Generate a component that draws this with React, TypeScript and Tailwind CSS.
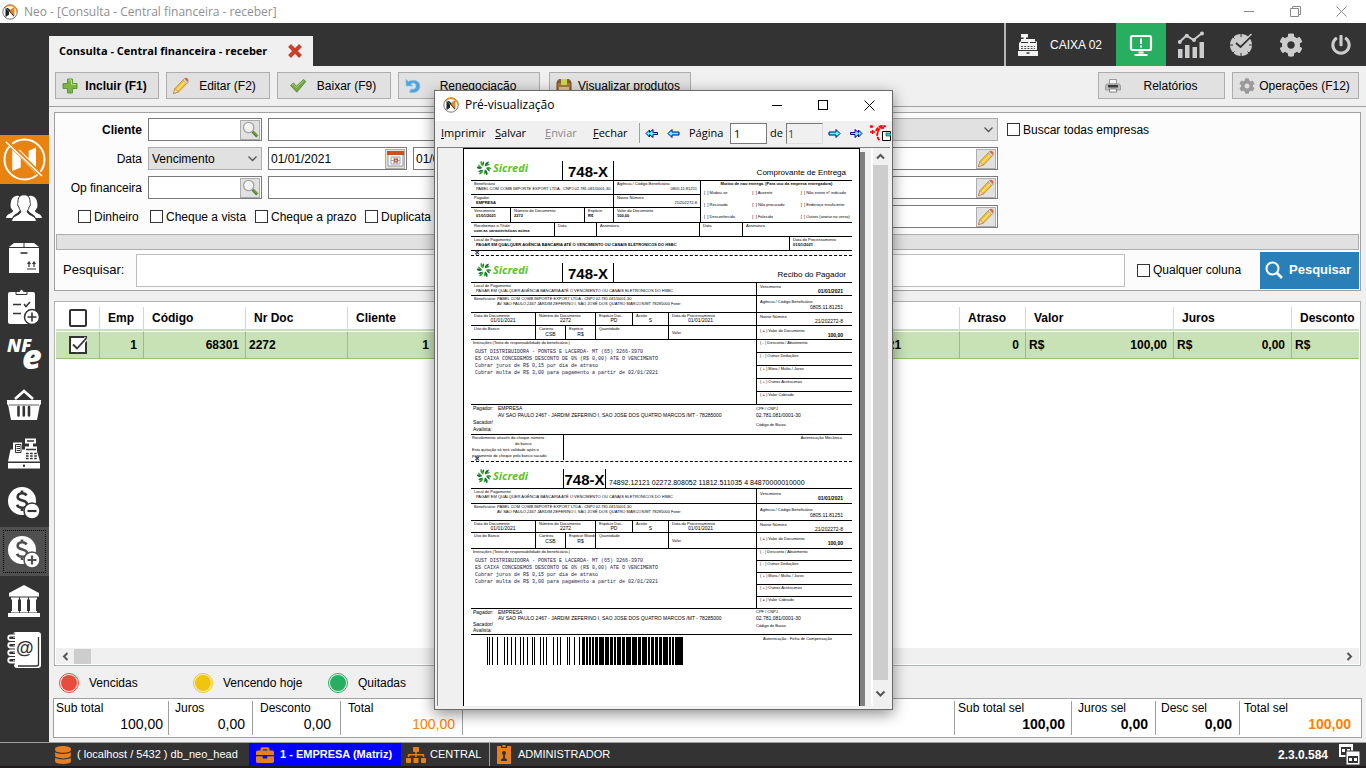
import type { ReactNode } from "react";
import { FaBriefcase, FaCog, FaCut, FaDatabase, FaSitemap, FaPowerOff } from "react-icons/fa";

/* ---------- ICONS ---------- */

function NeoLogo({ size = 16 }: { size?: number }) {
  return (
    <svg width={size} height={size} viewBox="0 0 16 16" className="shrink-0">
      <circle cx="8" cy="8" r="7.2" fill="#fff" stroke="#777" strokeWidth="1" />
      <path d="M3 3.500A7.200 7.200 0 0 1 15.200 8" fill="none" stroke="#f08519" strokeWidth="1.200" />
      <path d="M3.500 4v9L7 10.800V7.400z" fill="#222" />
      <path d="M4 4l8 8.800v-3L6 4z" fill="#222" />
      <path d="M8.500 5.200l4-2.200v9L8.500 8z" fill="#f08519" />
    </svg>
  );
}

function Plus() {
  return (
    <svg width="16" height="16" viewBox="0 0 16 16">
      <path d="M5.500 1h5v4.500H15v5h-4.500V15h-5v-4.500H1v-5h4.500z" fill="#7db343" stroke="#5f9438" />
      <path d="M6.500 2h3v4.500H14" fill="none" stroke="#b9dd8c" />
    </svg>
  );
}

function Pencil() {
  return (
    <svg width="18" height="18" viewBox="0 0 18 18" className="shrink-0">
      <path d="M1.500 16.500l1.500-5 9-9.500 3.600 3.600L6.500 15z" fill="#f7c22f" stroke="#b9812c" strokeWidth=".8" />
      <path d="M4.800 13.200l9-9.300" stroke="#fde68a" strokeWidth="1.300" />
      <path d="M1.500 16.500l1.500-5 3.500 3.500z" fill="#f3d9b1" stroke="#a9794a" strokeWidth=".6" />
      <path d="M11 3.100l1.400-1.500 3.700 3.700-1.400 1.500z" fill="#d4d8dc" stroke="#8c9196" strokeWidth=".6" />
      <path d="M12.400 1.600c1-1.300 2.300-1 3.200-.1s1.300 2.200.5 3.800z" fill="#e8622c" />
    </svg>
  );
}

function Check() {
  return (
    <svg width="18" height="16" viewBox="0 0 18 16">
      <path d="M1.500 7.500L4.500 5l3 3.200L14.500 1.500l2.300 2L7.800 14.200z" fill="#74a745" stroke="#4f8128" strokeWidth=".8" />
      <path d="M3 7.300l1.500-1.100 3 3.200 7-6.600" fill="none" stroke="#a9d07d" />
    </svg>
  );
}

function Undo() {
  return (
    <svg width="16" height="16" viewBox="0 0 16 16">
      <path d="M1 1v7h7L5.800 5.800C8.500 4 11 5.500 11 8s-2.500 4-5.500 3l-1 3.200C10 16 15 13 15 8S9 .500 3.500 3.500z" fill="#4da3dc" stroke="#93c9ee" strokeWidth=".7" />
    </svg>
  );
}

function Crate() {
  return (
    <svg width="16" height="16" viewBox="0 0 16 16">
      <path d="M1 3l2-2h10l2 2v11H1z" fill="#8c6239" />
      <path d="M1 4h14v10H1z" fill="#a9783f" stroke="#6d4a22" />
      <path d="M5 1h6v6H5z" fill="#c8d94e" />
      <path d="M3 9h10v3H3z" fill="#dcc39a" />
    </svg>
  );
}

function Printer() {
  return (
    <svg width="16" height="16" viewBox="0 0 16 16">
      <path d="M4.500 1.500h7V6h-7z" fill="#f5f5f5" stroke="#999" />
      <path d="M1.500 6h13l1 2v4H.500V8z" fill="#bdbdbd" stroke="#888" strokeWidth=".7" />
      <path d="M3 7h10v2.500H3z" fill="#3b3b3b" />
      <path d="M4.500 11h7v3h-7z" fill="#fff" stroke="#555" strokeWidth=".7" />
    </svg>
  );
}

function Lens() {
  return (
    <svg width="17" height="17" viewBox="0 0 17 17">
      <path d="M10.500 10.500l4.800 5" stroke="#4f7f28" strokeWidth="3" />
      <path d="M10.800 10.200l4.300 4.500" stroke="#8cba5a" />
      <circle cx="6.700" cy="6.500" r="5.200" fill="#f1f1f1" stroke="#a5a5a5" strokeWidth="1.300" />
      <path d="M3.500 6a3.500 3.500 0 0 1 3-3" fill="none" stroke="#fff" strokeWidth="1.500" />
    </svg>
  );
}

function Calendar() {
  return (
    <svg width="17" height="17" viewBox="0 0 17 17">
      <path d="M1 4h15v12H1z" fill="#fafafa" stroke="#999" />
      <path d="M0 1h17v4H0z" fill="#c9511d" />
      <path d="M4 7h9v7H4zM4 10.500h9M7 7v7M10 7v7" fill="none" stroke="#9aa3c4" />
      <path d="M7 8.500h4v4H7z" fill="#c9511d" />
      <path d="M8.300 9.800h1.400v1.400H8.300z" fill="#fff" />
    </svg>
  );
}

function Chevron({ d, strokeWidth = 1.3 }: { d: string; strokeWidth?: number }) {
  return (
    <svg width="11" height="11" viewBox="0 0 11 11" className="shrink-0">
      <path d={d} fill="none" stroke="#555" strokeWidth={strokeWidth} />
    </svg>
  );
}

const LEFT = "M7.500 2l-3.500 3.500 3.500 3.500";
const RIGHT = "M3.500 2l3.500 3.500-3.500 3.500";
const UP = "M2 7.500l3.500-3.500 3.500 3.500";
const DOWN = "M1.500 3.500l4 4 4-4";

function Register() {
  return (
    <svg width="34" height="34" viewBox="0 0 34 34">
      <path d="M1 26h32v5.500H1zM3.500 12.500h26l3.500 12H1zM6 5.500h9v7H6zM18 1.500h11v5H18zM22 6h4v5h-4zM18 9.500h12v5H18z" fill="#fff" />
      <path d="M8.500 7.500H14v8H8.500zM9.500 9.500H13M9.500 11.500H13M9.500 13.500H13" fill="none" stroke="#333" />
      <path d="M20 4h7M19 12.500h10" stroke="#333" strokeWidth="1.600" />
      <path d="M19 16.500h11M19 19h11M19 21.500h11" stroke="#333" strokeWidth="1.500" strokeDasharray="2.600 1.500" />
      <circle cx="17" cy="28.700" r="1.200" fill="#333" />
    </svg>
  );
}

function CashierIcon() {
  return (
    <svg width="20" height="22" viewBox="0 0 20 22">
      <path d="M3 0h7v3.500H8V5h9v2.500h2V16H1V9l2-2V5h2.500V3.500H3zM0 17h20v5H0z" fill="#f2f2f2" />
      <path d="M12 8.500h6M3 8.500h7" stroke="#333" />
      <path d="M3 12.500h14M3 14.500h14" stroke="#555" strokeDasharray="2 1.200" />
      <path d="M8.500 19h3" stroke="#333" strokeWidth="1.500" />
    </svg>
  );
}

function PeopleIcon() {
  return (
    <svg width="38" height="30" viewBox="0 0 38 30" fill="#fff">
      <path d="M11 2c3-1 4.500.5 4.300 1.300C13.500 5.500 13 8 13.500 11c.3 2 .9 3 1.600 4.500-1 4-6 3.500-7.800 8.500H1c.5-5 7-4 7-7.500-3-2.500-2.500-5-2.200-8C6.200 5 8 2.700 11 2z" />
      <path d="M27 2c-3-1-4.500.5-4.300 1.300C24.500 5.500 25 8 24.500 11c-.3 2-.9 3-1.600 4.500 1 4 6 3.500 7.800 8.500H37c-.5-5-7-4-7-7.500 3-2.500 2.500-5 2.200-8C31.800 5 30 2.700 27 2z" />
      <path d="M19 .8c4.600 0 6.200 3.200 6 7.400 1 1.600.3 3.600-.9 4.800-.4 2-1 3-2 4 0 5 8.900 3.500 9.400 10.500H6.500C7 20.500 15.900 22 15.900 17c-1-1-1.600-2-2-4-1.200-1.200-1.900-3.200-.9-4.800-.2-4.200 1.400-7.400 6-7.400z" stroke="#333" strokeWidth="1" />
    </svg>
  );
}

function BoxIcon() {
  return (
    <svg width="32" height="32" viewBox="0 0 32 32">
      <path d="M6 1h9.500v4H1zM16.500 1H26l5 4H16.500zM1 6h30v25H1z" fill="#fff" />
      <path d="M12.500 11h7" stroke="#333" strokeWidth="1.600" />
      <path d="M19 27h9M21 25v-4.500M26 25v-4.500M19.500 22l1.500-2 1.500 2M24.500 22l1.500-2 1.500 2" fill="none" stroke="#333" strokeWidth="1.200" />
    </svg>
  );
}

function ClipboardIcon() {
  return (
    <svg width="34" height="36" viewBox="0 0 34 36">
      <path d="M3 3h23a2 2 0 0 1 2 2v28a2 2 0 0 1-2 2H3a2 2 0 0 1-2-2V5a2 2 0 0 1 2-2z" fill="#fff" />
      <path d="M9 5.500V2.500h3.500a2 2 0 0 1 4 0H20v3z" fill="#fff" stroke="#333" />
      <path d="M6 15.500h8M6 24.500h8M17 15l2 2.500 4-4.500" fill="none" stroke="#333" strokeWidth="1.500" />
      <circle cx="25" cy="28" r="7.500" fill="#fff" stroke="#333" strokeWidth="1.500" />
      <path d="M25 23.500v9M20.500 28h9" stroke="#333" strokeWidth="1.600" />
    </svg>
  );
}

function NfeIcon() {
  return (
    <svg width="49" height="49" viewBox="0 0 49 49" fill="#fff" fontFamily="Open Sans, sans-serif" fontWeight="800" fontStyle="italic">
      <text x="7" y="21" fontSize="18">NF</text>
      <text x="22" y="38" fontSize="34">e</text>
    </svg>
  );
}

function BasketIcon() {
  return (
    <svg width="36" height="34" viewBox="0 0 36 34">
      <path d="M9 11l9-8 9 8" fill="none" stroke="#fff" strokeWidth="2.600" />
      <path d="M1 12h34v4.500h-1L31 32H5L2 16.500H1z" fill="#fff" />
      <path d="M3 17h30" stroke="#333" strokeWidth=".8" />
      <path d="M12.500 19v8.500M17.800 19v8.500M23 19v8.500" stroke="#333" strokeWidth="2.600" strokeLinecap="round" />
    </svg>
  );
}

function MoneyIcon({ plus = false }: { plus?: boolean }) {
  const dark = plus ? "#505050" : "#333";
  return (
    <svg width="34" height="34" viewBox="0 0 34 34">
      <circle cx="15" cy="15" r="14" fill="#fff" />
      <path d="M19.500 9.500c-1-1.800-3-2.300-4.600-2.200-2.800.2-4.300 1.900-4.200 3.900.2 4.200 9.500 2.500 9.300 6.800-.1 2.400-2.200 3.800-4.800 3.800-2.400 0-4.400-1-5.200-3M15 4.500v3M15 22v3" fill="none" stroke={dark} strokeWidth="2.600" />
      <circle cx="25" cy="25" r="8" fill="#fff" stroke={dark} strokeWidth="1.500" />
      <path d={plus ? "M25 20.500v9M20.500 25h9" : "M20.500 25h9"} stroke={dark} strokeWidth="2.200" />
    </svg>
  );
}

function BankIcon() {
  return (
    <svg width="34" height="34" viewBox="0 0 34 34" fill="#fff">
      <path d="M17 1l15 8v3.500H2V9zM4 13.500h8v2h-1V27h1v1.500H4V27h1V15.500H4zM13 13.500h8v2h-1V27h1v1.500h-8V27h1V15.500h-1zM22 13.500h8v2h-1V27h1v1.500h-8V27h1V15.500h-1zM1 29h32v4H1z" />
    </svg>
  );
}

function ContactsIcon() {
  return (
    <svg width="36" height="38" viewBox="0 0 36 38">
      <path d="M10 1h22a3 3 0 0 1 3 3v30a3 3 0 0 1-3 3H11a3 3 0 0 1-3-3l-1-3V4a3 3 0 0 1 3-3z" fill="#fff" />
      <path d="M32.500 6v27a2 2 0 0 1-2 2H12" fill="none" stroke="#333" strokeWidth="1.300" />
      <path d="M9 4.500H4.500a2 2 0 0 0 0 4.500H9M9 12H4.500a2 2 0 0 0 0 4.500H9M9 19.500H4.500a2 2 0 0 0 0 4.500H9M9 27H4.500a2 2 0 0 0 0 4.500H9" fill="none" stroke="#333" strokeWidth="4" />
      <path d="M9 4.500H4.500a2 2 0 0 0 0 4.500H9M9 12H4.500a2 2 0 0 0 0 4.500H9M9 19.500H4.500a2 2 0 0 0 0 4.500H9M9 27H4.500a2 2 0 0 0 0 4.500H9" fill="none" stroke="#fff" strokeWidth="1.800" />
      <text x="10" y="23" fontFamily="Liberation Sans, sans-serif" fontSize="18" fontWeight="700" fill="#333">@</text>
    </svg>
  );
}

function NeoWhite() {
  return (
    <svg width="43" height="43" viewBox="0 0 43 43">
      <circle cx="21.500" cy="21.500" r="20" fill="none" stroke="#fff" strokeWidth="2" />
      <path d="M9.300 11v22l8.400-3.500V20L33 35.500V9.500L25.700 12.800V20.500L17 12z" fill="#fff" />
      <path d="M3 2.500l36.500 36" stroke="#e8830f" strokeWidth="4" />
      <path d="M3 4l36 34" stroke="#fff" strokeWidth="1.600" />
    </svg>
  );
}

function MonitorIcon() {
  return (
    <svg width="24" height="24" viewBox="0 0 24 24" fill="none" stroke="#fff">
      <rect x="2" y="3" width="20" height="14" rx="1.500" strokeWidth="2.200" />
      <path d="M12 5.500v5.500M12 12.500v2" strokeWidth="2" />
      <path d="M9.500 19.500h5M5.500 22h13" strokeWidth="1.800" />
    </svg>
  );
}

function ChartIcon() {
  return (
    <svg width="28" height="28" viewBox="0 0 28 28" fill="#ccc">
      <path d="M1 18h4.500v9H1zM8 14h4.500v13H8zM15.500 16H20v11h-4.500zM22.500 11H27v16h-4.500z" />
      <path d="M2.500 11l7-6.500 7 4.500 8-6.500" fill="none" stroke="#ccc" strokeWidth="2" />
      <circle cx="2.800" cy="11" r="2" /><circle cx="9.800" cy="4.800" r="2" /><circle cx="17" cy="9" r="2" /><circle cx="25" cy="2.500" r="2" />
    </svg>
  );
}

function ClockIcon() {
  return (
    <svg width="24" height="24" viewBox="0 0 24 24">
      <circle cx="12" cy="12" r="11" fill="#ccc" />
      <path d="M12 1v3M12 20v3M1 12h3M20 12h3M4 4l1.500 1.500M4 20l1.500-1.500M20 20l-1.500-1.500" stroke="#333" />
      <path d="M7 10l4.500 4L23 2.500" fill="none" stroke="#333" strokeWidth="2" />
      <path d="M12 11L22.500 1" fill="none" stroke="#ccc" strokeWidth="1.500" />
    </svg>
  );
}

function WindowsIcon() {
  return (
    <svg width="21" height="21" viewBox="0 0 21 21">
      <path d="M0 0h14v13H0z" fill="#fff" />
      <path d="M2 3h10v8H2z" fill="#333" />
      <path d="M3 5h3v3H3zM8 5h3v3H8z" fill="#fff" />
      <path d="M7 7h14v14H7z" fill="#fff" stroke="#333" />
      <path d="M9 12h10v7H9z" fill="#333" />
      <path d="M10 14h3v3h-3zM15 14h3v3h-3z" fill="#fff" />
    </svg>
  );
}

function BadgeIcon() {
  return (
    <svg width="14" height="19" viewBox="0 0 14 19">
      <path d="M0 1h4v2h6V1h4v18H0z" fill="#e67e22" />
      <path d="M5.500 0h3v2h-3z" fill="#e67e22" />
      <circle cx="7" cy="8" r="2" fill="#333" />
      <path d="M6 9h2v4l2 1.500V16H4v-1.500L6 13z" fill="#333" />
    </svg>
  );
}

function Arrow({ double = false, right = false }: { double?: boolean; right?: boolean }) {
  return (
    <svg width="13" height="11" viewBox="0 0 13 11" className={right ? "rotate-180" : ""}>
      {double ? (
        <path d="M1 5.500L4.500 2v2.500L8 1.500v3h4.500v2H8v3L4.500 6.500V9z" fill="#5ff" stroke="#000090" />
      ) : (
        <path d="M1 5.500L5 1.500v2.500h7v3H5v2.500z" fill="#5ff" stroke="#000090" />
      )}
    </svg>
  );
}

function Sicredi() {
  const petals = [0, 60, 120, 180, 240, 300];
  return (
    <span className="mb-1 flex h-4 items-center gap-[2px] font-['Open_Sans',sans-serif] text-[11px] font-bold italic text-[#5cc02c]">
      <svg width="14" height="14" viewBox="-7 -7 14 14">
        {petals.map((angle, i) => (
          <path
            key={angle}
            d="M1-1.500C.5-4 2-6.300 5-6.300 4.300-4.500 3.500-2 1-1.500zM-1-2.500C-2-4.500-1.500-6 0-6.800.2-5 .3-4-1-2.500z"
            transform={`rotate(${angle})`}
            fill={i % 2 ? "#3fa535" : "#156f3c"}
          />
        ))}
      </svg>
      Sicredi
    </span>
  );
}

/* ---------- BARCODE ---------- */

const thinBars = [0, 2, 5, 10, 17, 20, 24, 28, 33, 36, 40, 45, 47, 53, 56, 59, 66, 70, 73, 80, 82, 87, 92];
const slits = [98, 101, 104, 107, 111, 117, 122, 126, 129, 134, 138, 144, 150, 154, 160, 163, 167, 171, 175, 181, 184, 187];

function Barcode() {
  return (
    <svg width="196" height="28" viewBox="0 0 196 28" shapeRendering="crispEdges" className="ml-4 mt-[2px]">
      {thinBars.map((x) => <rect key={x} x={x} width="1" height="28" />)}
      <rect x="95" width="101" height="28" />
      {slits.map((x) => <rect key={x} x={x} width="1" height="28" fill="#fff" />)}
    </svg>
  );
}

/* ---------- BANK SLIP ---------- */

type CellProps = { label?: string; value?: string; className?: string; valueClass?: string };

function Cell({ label, value, className = "", valueClass = "" }: CellProps) {
  return (
    <div className={`flex flex-col overflow-hidden whitespace-nowrap border-black px-[3px] text-[4px] leading-[5px] ${className}`}>
      <span>{label}</span>
      {value && <span className={valueClass}>{value}</span>}
    </div>
  );
}

function SlipHeader({ title, code, className }: { title?: string; code?: string; className: string }) {
  return (
    <div className={`flex items-end border-b border-black ${className}`}>
      <div className={`pl-[6px] ${code ? "w-[92px]" : "w-[91px]"}`}><Sicredi /></div>
      <div className={`flex h-[19px] items-end justify-center whitespace-nowrap border-x border-black text-[15px] font-bold leading-[16px] ${code ? "w-[43px]" : "w-[52px]"}`}>748-X</div>
      {code && <div className="pl-[3px] text-[7px] leading-[10px]">{code}</div>}
      {title && <div className="flex-1 pr-[6px] text-right text-[8px] leading-[14px]">{title}</div>}
    </div>
  );
}

function CutLine({ className }: { className: string }) {
  return (
    <div className={`flex items-end border-b border-dashed border-black pl-1 ${className}`}>
      <FaCut size={5} color="#234" className="shrink-0" />
    </div>
  );
}

const motives = [
  "Mudou-se", "Ausente", "Não existe nº indicado",
  "Recusado", "Não procurado", "Endereço insuficiente",
  "Desconhecido", "Falecido", "Outros (anotar no verso)",
];

function Receipt() {
  return (
    <section>
      <SlipHeader title="Comprovante de Entrega" className="h-8" />
      <div className="flex border-b border-black">
        <div className="w-[229px]">
          <div className="flex h-[14px] border-b border-black">
            <Cell className="w-[143px] border-r" label="Beneficiário" value="PABEL COM COMB IMPORTE EXPORT LTDA - CNPJ 02.781.081/0001-30" valueClass="pl-[2px]" />
            <Cell className="flex-1" label="Agência / Código Beneficiário" value="0805.11.81251" valueClass="text-right" />
          </div>
          <div className="flex h-[13px] border-b border-black">
            <Cell className="w-[143px] border-r" label="Pagador" value="EMPRESA" valueClass="pl-[2px] font-bold" />
            <Cell className="flex-1" label="Nosso Número" value="21/202272-8" valueClass="text-right" />
          </div>
          <div className="flex h-[14px]">
            <Cell className="w-10 border-r" label="Vencimento" value="01/01/2021" valueClass="pl-[2px] font-bold" />
            <Cell className="w-[74px] border-r" label="Número do Documento" value="2272" valueClass="font-bold" />
            <Cell className="w-[29px] border-r" label="Espécie" value="R$" valueClass="font-bold" />
            <Cell className="flex-1" label="Valor do Documento" value="100,00" valueClass="font-bold" />
          </div>
        </div>
        <div className="flex-1 border-l border-black px-[3px] text-[4px] leading-[6px]">
          <p className="text-center font-bold">Motivo de nao entrega. (Para uso da empresa entregadora)</p>
          <div className="grid grid-cols-3 gap-y-[6px] whitespace-nowrap pt-[3px]">
            {motives.map((motive) => <span key={motive}>[ &nbsp;] {motive}</span>)}
          </div>
        </div>
      </div>
      <div className="flex h-[14px] border-b border-black">
        <Cell className="w-[84px] border-r" label="Recebemos o Título" value="com as características acima" valueClass="font-bold" />
        <Cell className="w-[42px] border-r" label="Data" />
        <Cell className="w-[103px] border-r" label="Assinatura" />
        <Cell className="w-[43px] border-r" label="Data" />
        <Cell className="flex-1" label="Assinatura" />
      </div>
      <div className="flex h-[14px] border-b border-black">
        <Cell className="flex-1" label="Local de Pagamento" value="PAGAR EM QUALQUER AGÊNCIA BANCARIA ATÉ O VENCIMENTO OU CANAIS ELETRONICOS DO HSBC" valueClass="pl-[2px] font-bold" />
        <Cell className="w-[63px] border-l" label="Data do Processamento" value="01/01/2021" valueClass="font-bold" />
      </div>
      <CutLine className="h-[5px]" />
    </section>
  );
}

const deductions = ["( - ) Desconto / Abatimento", "( - ) Outras Deduções", "( + ) Mora / Multa / Juros", "( + ) Outros Acréscimos", "( = ) Valor Cobrado"];

type SlipProps = {
  title?: string;
  code?: string;
  placeClass: string;
  docClass: string;
  useClass: string;
  bodyClass: string;
  payerClass: string;
};

function Slip({ title, code, placeClass, docClass, useClass, bodyClass, payerClass }: SlipProps) {
  return (
    <section>
      <SlipHeader title={title} code={code} className="h-[27px]" />
      <div className={`flex border-b border-black ${placeClass}`}>
        <Cell className="flex-1" label="Local de Pagamento" value="PAGAR EM QUALQUER AGÊNCIA BANCARIA ATÉ O VENCIMENTO OU CANAIS ELETRONICOS DO HSBC" valueClass="pl-[2px]" />
        <Cell className="w-24 justify-center border-l" label="Vencimento" value="01/01/2021" valueClass="pr-[6px] text-right text-[5px] font-bold" />
      </div>
      <div className="flex h-[17px] border-b border-black">
        <Cell className="flex-1" label="Beneficiário: PABEL COM COMB IMPORTE EXPORT LTDA - CNPJ 02.781.081/0001-30" value="AV SAO PAULO,2467 JARDIM ZEFERINO I, SÃO JOSÉ DOS QUATRO MARCOS/MT 78285000 Fone:" valueClass="pl-[23px]" />
        <Cell className="w-24 justify-center border-l" label="Agência / Código Beneficiário" value="0805.11.81251" valueClass="pr-[6px] text-right text-[5px] leading-[6px]" />
      </div>
      <div className={`flex border-b border-black ${docClass}`}>
        <Cell className="w-[65px] border-r" label="Data do Documento" value="01/01/2021" valueClass="text-center text-[5px]" />
        <Cell className="w-[60px] border-r" label="Número do Documento" value="2272" valueClass="text-center text-[5px]" />
        <Cell className="w-[37px] border-r" label="Espécie Doc." value="PD" valueClass="text-center text-[5px]" />
        <Cell className="w-[36px] border-r" label="Aceite" value="S" valueClass="text-center text-[5px]" />
        <Cell className="flex-1" label="Data do Processamento" value="01/01/2021" valueClass="pl-4 text-[5px]" />
        <Cell className="w-24 justify-center border-l" label="Nosso Número" value="21/202272-8" valueClass="pr-[6px] text-right text-[5px]" />
      </div>
      <div className={`flex border-b border-black ${useClass}`}>
        <Cell className="w-[65px] border-r" label="Uso do Banco" />
        <Cell className="w-[30px] border-r" label="Carteira" value="CSB" valueClass="text-center text-[5px] leading-[7px]" />
        <Cell className="w-[30px] border-r" label={code ? "Espécie Moeda" : "Espécie"} value="R$" valueClass="text-center text-[5px] leading-[7px]" />
        <Cell className="w-[73px] border-r" label="Quantidade" />
        <Cell className="flex-1 justify-center" label="Valor" />
        <Cell className="w-24 justify-center border-l" label="( = ) Valor do Documento" value="100,00" valueClass="pr-[6px] text-right text-[5px] font-bold" />
      </div>
      <div className={`flex border-b border-black ${bodyClass}`}>
        <div className="flex-1 px-[2px] text-[4px] leading-[6px]">
          <p>Instruções (Texto de responsabilidade do beneficiário.)</p>
          <p className="whitespace-pre pl-[2px] pt-[3px] font-['Liberation_Mono',monospace] text-[5px] leading-[7px] text-[#224]">
            {`GUST DISTRIBUIDORA - PONTES E LACERDA- MT (65) 3266-3970
ES CAIXA CONCEDEMOS DESCONTO DE 0% (R$ 0,00) ATE O VENCIMENTO
Cobrar juros de R$ 0,15 por dia de atraso
Cobrar multa de R$ 3,00 para pagamento a partir de 02/01/2021`}
          </p>
        </div>
        <div className="flex w-24 flex-col divide-y divide-black border-l border-black">
          {deductions.map((label) => <Cell key={label} className="flex-1" label={label} />)}
        </div>
      </div>
      <div className={`flex border-b border-black px-[2px] text-[5px] ${payerClass}`}>
        <div className="flex-1">
          <p><span className="inline-block w-[25px]">Pagador:</span>EMPRESA</p>
          <p className="pl-[25px]">AV SAO PAULO 2467 - JARDIM ZEFERINO I, SAO JOSE DOS QUATRO MARCOS /MT - 78285000</p>
          <p>Sacador/</p>
          <p>Avalista:</p>
        </div>
        <div className="w-[94px]">
          <p className="text-[4px]">CPF / CNPJ</p>
          <p>02.781.081/0001-30</p>
          <p className="pt-[2px] text-[4px]">Código de Baixa:</p>
        </div>
      </div>
    </section>
  );
}

/* ---------- PREVIEW WINDOW ---------- */

function Preview() {
  return (
    <div role="dialog" aria-label="Pré-visualização" className="absolute left-[434px] top-[90px] z-10 flex h-[620px] w-[459px] flex-col border border-[#6b6b6b] bg-[#f0f0f0] font-['Open_Sans',sans-serif] text-black shadow-[0_4px_14px_rgba(0,0,0,0.45)]">
      <div className="flex h-[30px] shrink-0 items-center bg-white pl-2 pb-[2px] text-xs">
        <NeoLogo />
        <span className="flex-1 pl-[6px]">Pré-visualização</span>
        <button aria-label="Minimizar" className="grid h-full w-[46px] place-items-center"><span className="h-px w-[10px] bg-black" /></button>
        <button aria-label="Maximizar" className="grid h-full w-[46px] place-items-center"><span className="h-[10px] w-[10px] border border-black" /></button>
        <button aria-label="Fechar janela" className="grid h-full w-[46px] place-items-center">
          <svg width="11" height="11" viewBox="0 0 11 11"><path d="M.5.5l10 10M10.500.5l-10 10" stroke="#000" /></svg>
        </button>
      </div>

      <div className="flex h-[26px] shrink-0 items-center overflow-hidden pb-[2px] pl-[6px] text-[11px]">
        <button className="w-[54px] text-left"><u>I</u>mprimir</button>
        <button className="w-[50px] text-left"><u>S</u>alvar</button>
        <button className="w-12 text-left text-[#8a8a8a]"><u>E</u>nviar</button>
        <button className="w-[46px] text-left"><u>F</u>echar</button>
        <span className="h-5 w-px bg-[#a0a0a0]" />
        <button aria-label="Primeira página" className="ml-[5px]"><Arrow double /></button>
        <button aria-label="Página anterior" className="ml-[9px]"><Arrow /></button>
        <label htmlFor="pagina" className="ml-[9px] w-[41px]">Página</label>
        <input id="pagina" defaultValue="1" className="h-[21px] w-[37px] border border-[#7a7a7a] bg-white px-[3px]" />
        <label htmlFor="paginas" className="w-[19px] pl-[3px]">de</label>
        <input id="paginas" defaultValue="1" readOnly className="h-[21px] w-[37px] border border-l-[#7a7a7a] border-t-[#7a7a7a] border-b-[#ddd] border-r-[#ddd] px-[1px] text-[#444]" />
        <button aria-label="Próxima página" className="ml-[5px]"><Arrow right /></button>
        <button aria-label="Última página" className="ml-[9px]"><Arrow double right /></button>
        <button aria-label="Fechar relatório" className="ml-[6px] shrink-0">
          <svg width="22" height="18" viewBox="0 0 22 18">
            <path d="M1 8h5M3.500 6v4" fill="none" stroke="#f00" strokeWidth="1.500" />
            <path d="M7 7c1-4 5-6 10-4.500M9 8c0-3 2.500-4.500 6-4M9 8c-2 3 0 7 2 9" fill="none" stroke="#f00" strokeWidth="1.800" strokeDasharray="4 .8" />
            <circle cx="2.500" cy="2.500" r="1.600" fill="#f00" />
            <path d="M13.500 7.500h8v9h-8z" fill="#fff" stroke="#000" />
            <path d="M17 9h5v3h-5z" fill="#3cc" stroke="#033" strokeWidth=".6" />
          </svg>
        </button>
      </div>

      <div className="mx-[2px] mb-[3px] flex min-h-0 flex-1 border-l border-t border-[#808080]">
        <div className="flex min-w-0 flex-1 overflow-hidden pl-[25px] font-['Liberation_Sans',Arial,sans-serif]">
          <div className="w-[397px] shrink-0 border border-b-0 border-black bg-white pl-[7px] pr-[7px]">
            <Receipt />
            <Slip title="Recibo do Pagador" placeClass="h-[13px]" docClass="h-[13px]" useClass="h-[14px]" bodyClass="h-[65px]" payerClass="h-[30px] leading-[7px]" />
            <div className="flex h-[25px] text-[4px] leading-[6px]">
              <div className="w-[93px] whitespace-nowrap border-r border-black pl-[1px]">
                <p>Recebimento através do cheque número</p>
                <p className="pl-[43px]">do banco</p>
                <p>Esta quitação só terá validade após o</p>
                <p>pagamento do cheque pelo banco sacado</p>
              </div>
              <p className="flex-1 pr-[10px] text-right">Autenticação Mecânica</p>
            </div>
            <CutLine className="h-[2px]" />
            <Slip code="74892.12121 02272.808052 11812.511035 4 84870000010000" placeClass="h-[15px]" docClass="h-[12px]" useClass="h-4" bodyClass="h-[60px]" payerClass="h-[26px] leading-[6px]" />
            <div className="flex justify-between">
              <Barcode />
              <p className="pr-5 text-[4px] leading-[8px]">Autenticação - Ficha de Compensação</p>
            </div>
          </div>
          <div className="mt-1 w-[5px] shrink-0 bg-[#808080]" />
        </div>
        <div className="mr-[2px] flex w-[17px] shrink-0 flex-col items-center border-l-2 border-white py-[3px]">
          <Chevron d={UP} strokeWidth={2} />
          <div className="my-[3px] w-[15px] flex-1 bg-[#cdcdcd]" />
          <div className="grid h-5 place-items-center"><Chevron d={DOWN} strokeWidth={2} /></div>
        </div>
      </div>
    </div>
  );
}

/* ---------- FORM PARTS ---------- */

function ToolButton({ icon, children, className }: { icon: ReactNode; children: ReactNode; className: string }) {
  return (
    <button className={`flex h-[27px] items-center whitespace-nowrap border border-[#adadad] bg-[#e1e1e1] hover:border-[#0078d7] ${className}`}>
      {icon}
      <span className="flex-1 text-center">{children}</span>
    </button>
  );
}

function Field({ label, value = "", icon, className }: { label: string; value?: string; icon?: ReactNode; className: string }) {
  return (
    <div className={`flex h-[23px] shrink-0 items-center border border-[#7a7a7a] bg-white ${className}`}>
      <input aria-label={label} defaultValue={value} className="h-full w-0 flex-1 px-[2px] outline-none" />
      {icon && <button aria-label={`Abrir ${label}`} className="mr-px grid h-5 w-5 shrink-0 place-items-center border border-[#adadad] bg-[#e1e1e1]">{icon}</button>}
    </div>
  );
}

function Select({ label, options, className }: { label: string; options: string[]; className: string }) {
  return (
    <div className={`relative flex h-[23px] shrink-0 items-center border border-[#adadad] bg-[#e1e1e1] ${className}`}>
      <select aria-label={label} className="h-full w-full appearance-none pl-[3px] outline-none">
        {options.map((option) => <option key={option}>{option}</option>)}
      </select>
      <span className="pointer-events-none absolute right-[3px]"><Chevron d={DOWN} /></span>
    </div>
  );
}

function Tick({ children }: { children: ReactNode }) {
  return (
    <label className="flex items-center gap-[3px] whitespace-nowrap">
      <input type="checkbox" className="h-[13px] w-[13px] appearance-none border border-[#333] bg-white checked:bg-[#333]" />
      {children}
    </label>
  );
}

function Total({ label, value, className }: { label: string; value: string; className: string }) {
  return (
    <div className={`my-[2px] flex flex-col border-[#a0a0a0] leading-[15px] ${className}`}>
      <span>{label}</span>
      <span className="text-right text-sm leading-[17px]">{value}</span>
    </div>
  );
}

function Legend({ children, className }: { children: ReactNode; className: string }) {
  return (
    <div className="flex items-center gap-[10px]">
      <span className={`grid h-5 w-5 place-items-center rounded-full border ${className}`}>
        <span className="h-4 w-4 rounded-full bg-current" />
      </span>
      <span className="text-black">{children}</span>
    </div>
  );
}

const menu = [
  { name: "Pessoas", icon: <PeopleIcon /> },
  { name: "Produtos", icon: <BoxIcon /> },
  { name: "Pedidos", icon: <ClipboardIcon /> },
  { name: "Nota fiscal", icon: <NfeIcon /> },
  { name: "Compras", icon: <BasketIcon /> },
  { name: "Caixa", icon: <Register /> },
  { name: "Contas a pagar", icon: <MoneyIcon /> },
  { name: "Contas a receber", icon: <MoneyIcon plus />, active: true },
  { name: "Bancos", icon: <BankIcon /> },
  { name: "Agenda", icon: <ContactsIcon /> },
];

const columns = [
  { title: "Emp", value: "1", width: "w-[44px]", align: "text-right" },
  { title: "Código", value: "68301", width: "w-[102px]", align: "text-right" },
  { title: "Nr Doc", value: "2272", width: "w-[102px]", align: "text-left" },
  { title: "Cliente", value: "1", width: "w-[88px]", align: "text-right" },
  { title: "Nome", value: "EMPRESA", width: "", align: "text-left" },
  { title: "Data", value: "01/01/2021", width: "w-[122px]", align: "text-left" },
  { title: "Atraso", value: "0", width: "w-[66px]", align: "text-right" },
  { title: "Valor", value: "100,00", currency: true, width: "w-[148px]", align: "text-right" },
  { title: "Juros", value: "0,00", currency: true, width: "w-[118px]", align: "text-right" },
  { title: "Desconto", value: "", currency: true, width: "w-[68px]", align: "text-right" },
];

/* ---------- PAGE ---------- */

export default function App() {
  return (
    <div className="relative flex min-h-screen flex-col overflow-hidden bg-[#333] font-['Liberation_Sans',Arial,sans-serif] text-xs text-black">

      {/* TITLE BAR */}

      <header className="flex h-[23px] shrink-0 items-center bg-white pl-[2px] font-['Open_Sans',sans-serif] text-[#8f8f8f]">
        <NeoLogo />
        <span className="flex-1 pl-[6px]">Neo - [Consulta - Central financeira - receber]</span>
        <button aria-label="Minimizar" className="grid h-full w-[46px] place-items-center"><span className="h-px w-[10px] bg-[#888]" /></button>
        <button aria-label="Restaurar" className="grid h-full w-[46px] place-items-center">
          <svg width="11" height="11" viewBox="0 0 11 11" fill="none" stroke="#888"><path d="M.5 2.500h8v8h-8zM2.500 2.500v-2h8v8h-2" /></svg>
        </button>
        <button aria-label="Fechar" className="mr-[2px] grid h-full w-[46px] place-items-center">
          <svg width="11" height="11" viewBox="0 0 11 11"><path d="M.5.5l10 10M10.500.5l-10 10" stroke="#888" /></svg>
        </button>
      </header>

      <div className="flex flex-1">

        {/* SIDEBAR */}

        <nav className="w-[49px] shrink-0 pt-28">
          <button aria-label="Neo" className="grid h-[49px] w-full place-items-center bg-[#e8830f]"><NeoWhite /></button>
          {menu.map((item) => (
            <button
              key={item.name}
              aria-label={item.name}
              className={`grid h-[49px] w-full place-items-center pr-px ${item.active ? "bg-[#505050] outline-1 -outline-offset-4 outline-dotted outline-black" : ""}`}
            >
              {item.icon}
            </button>
          ))}
        </nav>

        <div className="flex min-w-0 flex-1 flex-col">

          {/* TABS */}

          <div className="flex h-[43px] shrink-0 items-end justify-between">
            <div className="flex h-[30px] w-[264px] items-center justify-between whitespace-nowrap bg-[#f0f0f0] px-[10px] font-['Open_Sans',sans-serif] text-[11px] font-bold">
              Consulta - Central financeira - receber
              <button aria-label="Fechar aba">
                <svg width="16" height="16" viewBox="0 0 16 16"><path d="M2.500 2.500l11 11M13.500 2.500l-11 11" stroke="#c8402c" strokeWidth="4" /></svg>
              </button>
            </div>
            <div className="flex h-full items-center border-l-2 border-[#b5b5b5] text-white">
              <div className="flex w-[110px] items-center gap-3 pl-[12px]"><CashierIcon />CAIXA 02</div>
              <button aria-label="Avisos" className="grid h-full w-[50px] place-items-center bg-[#27ae60]"><MonitorIcon /></button>
              <button aria-label="Indicadores" className="grid h-full w-[50px] place-items-center"><ChartIcon /></button>
              <button aria-label="Tarefas" className="grid h-full w-[50px] place-items-center"><ClockIcon /></button>
              <button aria-label="Configurações" className="grid h-full w-[50px] place-items-center"><FaCog size={24} color="#ccc" /></button>
              <button aria-label="Sair" className="grid h-full w-[50px] place-items-center"><FaPowerOff size={20} color="#ccc" /></button>
            </div>
          </div>

          <main className="flex flex-1 flex-col bg-[#f0f0f0]">

            {/* TOOLBAR */}

            <div className="flex h-[41px] shrink-0 items-start gap-[7px] border-b border-[#a0a0a0] pl-[6px] pr-[7px] pt-[6px]">
              <ToolButton icon={<Plus />} className="w-[104px] pl-[6px] pr-1 font-bold">Incluir (F1)</ToolButton>
              <ToolButton icon={<Pencil />} className="w-[104px] pl-[5px] pr-1">Editar (F2)</ToolButton>
              <ToolButton icon={<Check />} className="w-[114px] pl-[11px] pr-1">Baixar (F9)</ToolButton>
              <ToolButton icon={<Undo />} className="w-[142px] pl-[6px] pr-1">Renegociação</ToolButton>
              <ToolButton icon={<Crate />} className="ml-[2px] w-[142px] pl-[6px] pr-1">Visualizar produtos</ToolButton>
              <ToolButton icon={<Printer />} className="ml-auto w-[127px] pl-[6px] pr-1">Relatórios</ToolButton>
              <ToolButton icon={<FaCog size={16} color="#9a9a9a" />} className="w-[127px] pl-[6px] pr-1">Operações (F12)</ToolButton>
            </div>

            {/* FILTERS */}

            <section className="ml-[5px] mr-[5px] mt-[5px] border border-[#a0a0a0] bg-[#fcfcfc]">
              <div className="flex flex-col gap-[6px] pt-[5px]">
                <div className="flex items-center gap-[6px]">
                  <span className="w-[87px] shrink-0 text-right font-bold">Cliente</span>
                  <Field label="Cliente" icon={<Lens />} className="w-[114px]" />
                  <Field label="Nome do cliente" className="w-[332px]" />
                  <Select label="Empresa" options={[""]} className="ml-[92px] w-[300px]" />
                  <div className="pl-[3px]"><Tick>Buscar todas empresas</Tick></div>
                </div>
                <div className="flex items-center gap-[6px]">
                  <span className="w-[87px] shrink-0 text-right">Data</span>
                  <Select label="Data" options={["Vencimento", "Emissão"]} className="w-[114px]" />
                  <Field label="Data inicial" value="01/01/2021" icon={<Calendar />} className="w-[139px]" />
                  <Field label="Data final" value="01/01/2021" icon={<Calendar />} className="w-[139px]" />
                  <Field label="Portador" icon={<Pencil />} className="ml-[140px] w-[300px]" />
                </div>
                <div className="flex items-center gap-[6px]">
                  <span className="w-[87px] shrink-0 text-right">Op financeira</span>
                  <Field label="Op financeira" icon={<Lens />} className="w-[114px]" />
                  <Field label="Nome da operação" className="w-[332px]" />
                  <Field label="Vendedor" icon={<Pencil />} className="ml-[92px] w-[300px]" />
                </div>
                <div className="flex items-center pl-[23px]">
                  <div className="w-[72px]"><Tick>Dinheiro</Tick></div>
                  <div className="w-[105px]"><Tick>Cheque a vista</Tick></div>
                  <div className="w-[110px]"><Tick>Cheque a prazo</Tick></div>
                  <div className="w-[333px]"><Tick>Duplicata</Tick></div>
                  <Field label="Categoria" icon={<Pencil />} className="w-[300px]" />
                </div>
              </div>
              <div className="mx-px mt-[6px] h-4 border border-[#adadad] bg-[#e1e1e1]" />
              <div className="flex h-10 items-center">
                <label htmlFor="pesquisa" className="w-[81px] shrink-0 pl-2 text-[13px]">Pesquisar:</label>
                <input id="pesquisa" className="h-[33px] min-w-0 flex-1 border border-[#bcbcbc] bg-white px-2 outline-none" />
                <div className="w-[135px] pl-3"><Tick>Qualquer coluna</Tick></div>
                <button className="mr-px flex h-[37px] w-[99px] items-center gap-[6px] bg-[#2980b9] pl-[5px] text-[13px] font-bold text-white">
                  <svg width="18" height="18" viewBox="0 0 18 18" fill="none" stroke="#fff" strokeWidth="2"><circle cx="7.500" cy="7.500" r="6" /><path d="M12 12l5 5" strokeWidth="2.600" /></svg>
                  Pesquisar
                </button>
              </div>
            </section>

            {/* GRID */}

            <section className="ml-[5px] mr-[5px] mt-[10px] flex flex-1 flex-col border border-[#adb2b5] bg-white px-px pt-[5px]">
              <table className="w-full table-fixed border-separate border-spacing-0 font-bold">
                <thead>
                  <tr className="h-[24px]">
                    <th className="w-[43px] border-b-2 border-[#c8e1b5]">
                      <input type="checkbox" aria-label="Selecionar todos" className="mx-auto block h-[18px] w-[18px] appearance-none rounded-xs border-2 border-[#333]" />
                    </th>
                    {columns.map((col) => (
                      <th key={col.title} className={`border-b-2 border-l border-[#c8e1b5] pl-2 text-left ${col.width}`}>{col.title}</th>
                    ))}
                  </tr>
                </thead>
                <tbody>
                  <tr className="h-[28px] bg-[#c8e1b5]">
                    <td className="border-b border-t border-b-[#8fc574] border-t-white">
                      <label className="mx-auto block h-[18px] w-[18px]">
                        <input type="checkbox" defaultChecked aria-label="Selecionar 68301" className="sr-only" />
                        <svg width="18" height="18" viewBox="0 0 18 18" fill="none" stroke="#333"><path d="M1 1h16v16H1z" fill="#fff" strokeWidth="2" /><path d="M4 9l4 4.500L17.500 2" stroke="#fff" strokeWidth="4" /><path d="M4 8.500l4 4L17.500 2" strokeWidth="1.800" /></svg>
                      </label>
                    </td>
                    {columns.map((col) => (
                      <td key={col.title} className={`whitespace-nowrap border-b border-l border-t border-[#8fc574] border-t-white pl-[3px] pr-[6px] ${col.align}`}>
                        {col.currency && <span className="float-left">R$</span>}
                        {col.value}
                      </td>
                    ))}
                  </tr>
                </tbody>
              </table>
              <div className="mb-px mt-auto flex h-4 items-center justify-between bg-[#f0f0f0] px-1">
                <div className="flex items-center gap-[3px]">
                  <Chevron d={LEFT} strokeWidth={2} />
                  <span className="h-[15px] w-[17px] bg-[#cdcdcd]" />
                </div>
                <Chevron d={RIGHT} strokeWidth={2} />
              </div>
            </section>

            {/* LEGEND */}

            <div className="flex h-8 shrink-0 items-center pl-[10px] pt-px">
              <div className="w-[134px]"><Legend className="border-[#e74c3c] text-[#e74c3c]">Vencidas</Legend></div>
              <div className="w-[135px]"><Legend className="border-[#f1c40f] text-[#f1c40f]">Vencendo hoje</Legend></div>
              <Legend className="border-[#27ae60] text-[#27ae60]">Quitadas</Legend>
            </div>

            {/* TOTALS */}

            <section className="mb-1 ml-1 mr-1 flex h-[40px] shrink-0 justify-between border border-[#a0a0a0] bg-white">
              <div className="flex">
                <Total label="Sub total" value="100,00" className="w-[115px] border-r pl-[2px] pr-[5px]" />
                <Total label="Juros" value="0,00" className="w-[84px] border-r pl-[6px] pr-[7px]" />
                <Total label="Desconto" value="0,00" className="w-[88px] border-r pl-[7px] pr-[9px]" />
                <Total label="Total" value="100,00" className="w-[122px] border-r pl-[7px] pr-[7px] [&>span:last-child]:text-[#ff8000]" />
              </div>
              <div className="flex">
                <Total label="Sub total sel" value="100,00" className="w-[117px] border-l pl-[3px] pr-[6px] [&>span:last-child]:font-bold" />
                <Total label="Juros sel" value="0,00" className="w-[84px] border-l pl-[6px] pr-[7px] [&>span:last-child]:font-bold" />
                <Total label="Desc sel" value="0,00" className="w-[84px] border-l pl-[5px] pr-[7px] [&>span:last-child]:font-bold" />
                <Total label="Total sel" value="100,00" className="w-[122px] border-l pl-[4px] pr-[10px] [&>span:last-child]:font-bold [&>span:last-child]:text-[#ff8000]" />
              </div>
            </section>
          </main>
        </div>
      </div>

      {/* STATUS BAR */}

      <footer className="flex h-[26px] shrink-0 items-stretch border-b-2 border-t border-b-[#1f1a1d] border-t-[#a0a0a0] pl-[54px] pr-[6px] text-[11px] text-white">
        <div className="flex w-[195px] items-center gap-[5px] whitespace-nowrap"><FaDatabase size={18} color="#e67e22" />( localhost / 5432 ) db_neo_head</div>
        <div className="flex w-[152px] items-center gap-[6px] whitespace-nowrap bg-[#0000ff] pl-[7px] font-bold"><FaBriefcase size={18} color="#e67e22" />1 - EMPRESA (Matriz)</div>
        <div className="flex w-[89px] items-center gap-1 border-r border-[#a0a0a0] pl-[5px]"><FaSitemap size={20} color="#e67e22" />CENTRAL</div>
        <div className="flex items-center gap-[7px] pl-[7px]"><BadgeIcon />ADMINISTRADOR</div>
        <div className="ml-auto flex items-center gap-[11px] text-xs font-bold">2.3.0.584<WindowsIcon /></div>
      </footer>

      <Preview />
    </div>
  );
}
